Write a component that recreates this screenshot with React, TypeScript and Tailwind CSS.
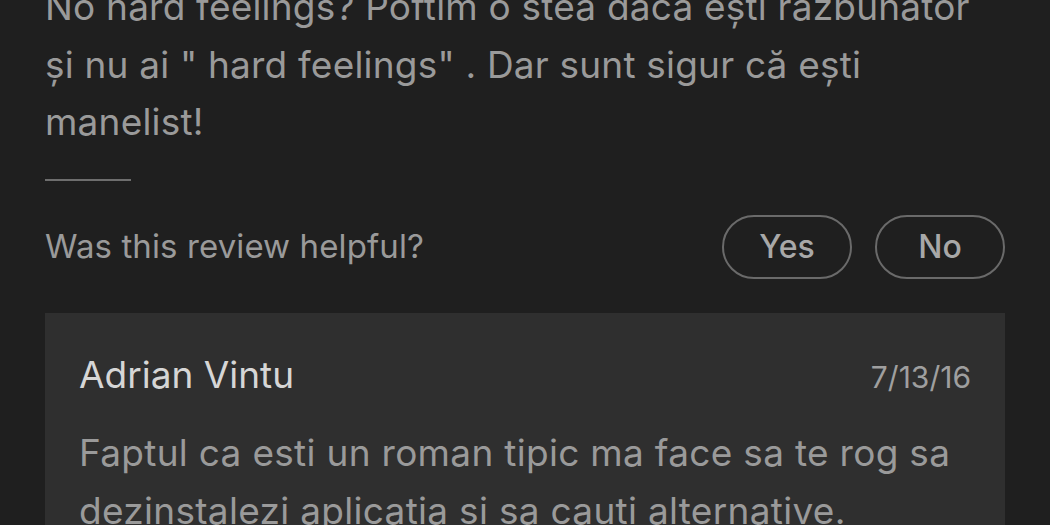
export default function App() {
  return (
    <div
      className="w-[1050px] h-[525px] overflow-hidden bg-[#1f1f1f] px-[45px]"
      style={{ fontFamily: 'Inter, "Noto Sans", sans-serif' }}
    >
      <p className="-mt-[22px] text-[37px] leading-[57.5px] tracking-[0.2px] text-[#9a9a9a]">
        <span className="block">No hard feelings? Poftim o stea daca ești razbunator</span>
        <span className="block">și nu ai " hard feelings" . Dar sunt sigur că ești</span>
        <span className="block">manelist!</span>
      </p>

      <div className="mt-[28px] h-[2px] w-[86px] bg-[#6e6e6e]" />

      <div className="mt-[34px] flex items-center justify-between">
        <span className="text-[33px] tracking-[0.1px] text-[#9a9a9a]">Was this review helpful?</span>
        <div className="flex gap-[23px]">
          <button className="h-[64px] w-[130px] rounded-full border-2 border-[#6a6a6a] text-[32px] font-medium text-[#a8a8a8]">
            Yes
          </button>
          <button className="h-[64px] w-[130px] rounded-full border-2 border-[#6a6a6a] text-[32px] font-medium text-[#a8a8a8]">
            No
          </button>
        </div>
      </div>

      <div className="mt-[34px] bg-[#2f2f2f] px-[34px] pt-[34px] pb-8">
        <div className="flex items-baseline justify-between">
          <span className="text-[37px] text-[#d6d6d6]">Adrian Vintu</span>
          <span className="text-[30px] text-[#9f9f9f]">7/13/16</span>
        </div>
        <p className="mt-[22px] text-[37px] leading-[57.5px] tracking-[0.3px] text-[#9a9a9a]">
          <span className="block">Faptul ca esti un roman tipic ma face sa te rog sa</span>
          <span className="block">dezinstalezi aplicatia si sa cauti alternative.</span>
        </p>
      </div>
    </div>
  );
}
